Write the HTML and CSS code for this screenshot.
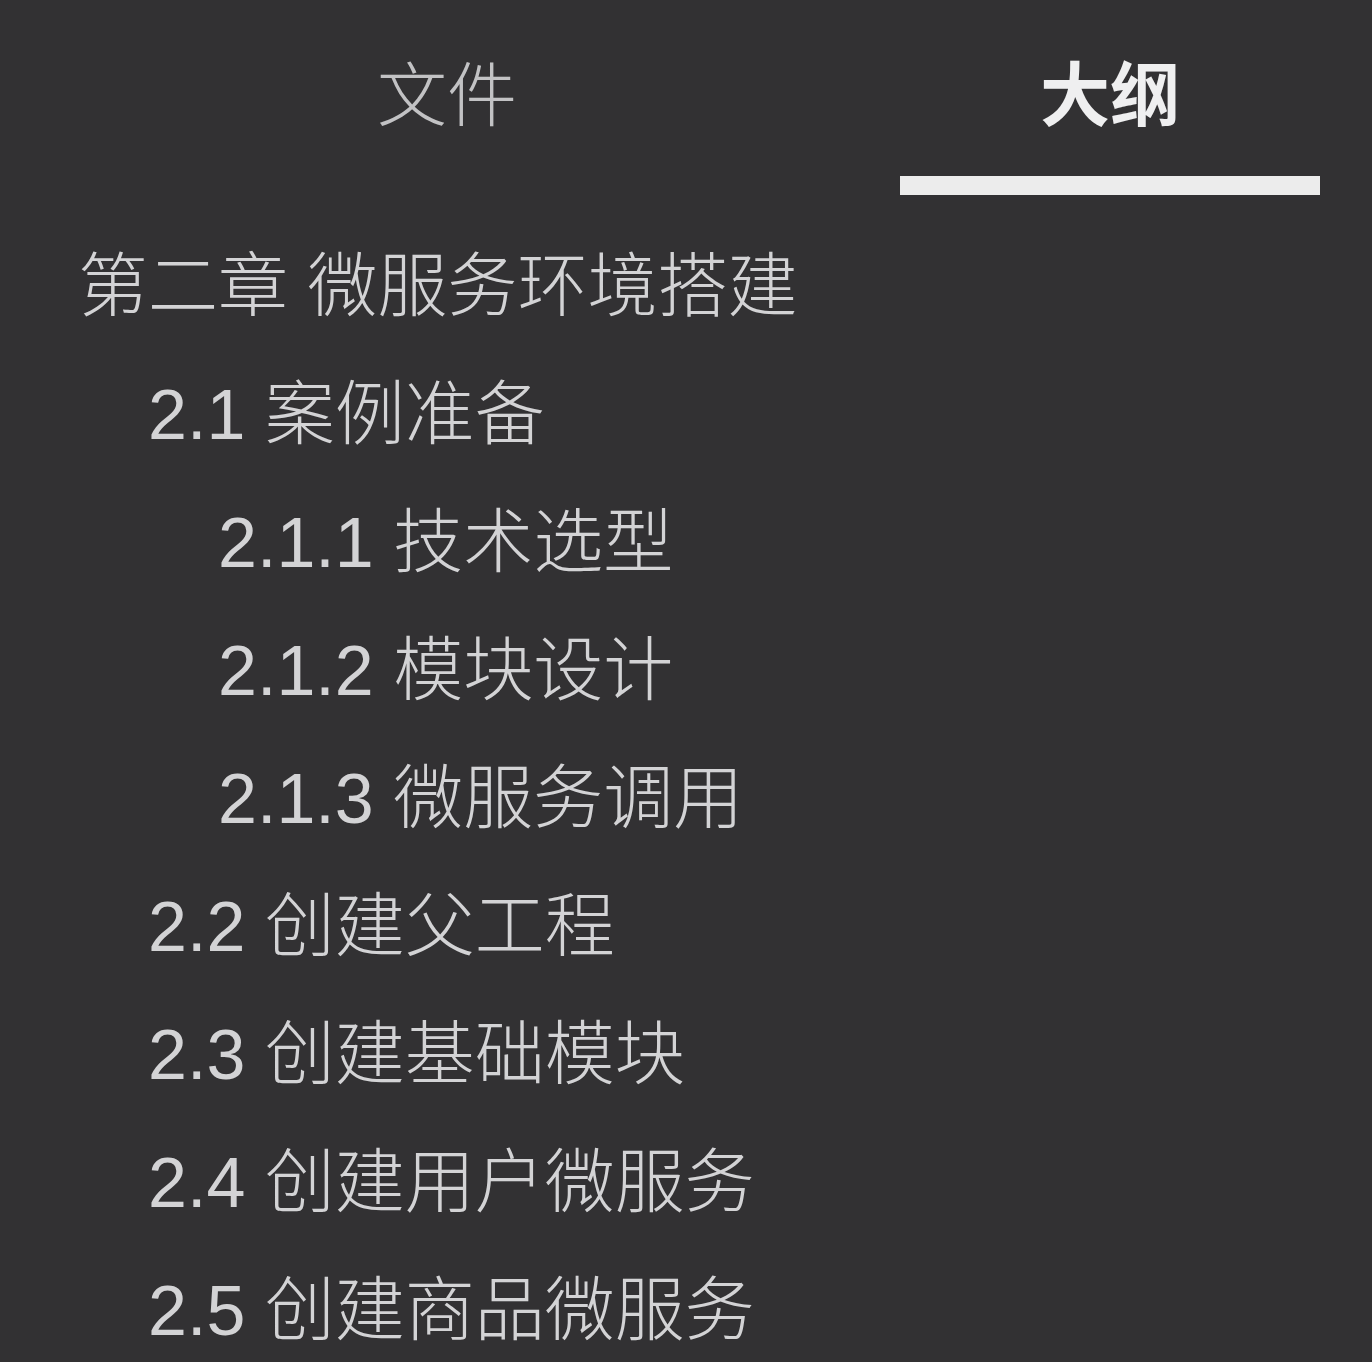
FILE: index.html
```html
<!DOCTYPE html>
<html lang="zh-CN">
<head>
<meta charset="utf-8">
<title>大纲</title>
<link rel="stylesheet" href="styles.css">
</head>
<body>
<div class="sidebar">
  <div class="tabs">
    <div class="tab tab-files"><span class="tab-label">文件</span></div>
    <div class="tab tab-outline active"><span class="tab-label">大纲</span><span class="tab-bar"></span></div>
  </div>
  <ul class="outline">
    <li class="lv1">第二章 微服务环境搭建</li>
    <li class="lv2">2.1 案例准备</li>
    <li class="lv3">2.1.1 技术选型</li>
    <li class="lv3">2.1.2 模块设计</li>
    <li class="lv3">2.1.3 微服务调用</li>
    <li class="lv2">2.2 创建父工程</li>
    <li class="lv2">2.3 创建基础模块</li>
    <li class="lv2">2.4 创建用户微服务</li>
    <li class="lv2">2.5 创建商品微服务</li>
  </ul>
</div>
</body>
</html>
```
FILE: styles.css
```css
html, body {
  margin: 0;
  padding: 0;
  background: #323133;
}
body {
  width: 1372px;
  height: 1362px;
  overflow: hidden;
  font-family: "Liberation Sans", "Noto Sans CJK SC", sans-serif;
}
.sidebar {
  display: flex;
  flex-direction: column;
}
.tabs {
  display: flex;
  padding-left: 237px;
  gap: 243px;
}
.tab {
  width: 420px;
  display: flex;
  flex-direction: column;
  align-items: center;
  padding-top: 55px;
}
.tab-label {
  font-size: 70px;
  line-height: 84px;
  height: 84px;
  color: #c2c2c4;
  font-weight: 300;
}
.tab.active .tab-label {
  color: #efeff0;
  font-weight: 700;
}
.tab-bar {
  display: block;
  margin-top: 37px;
  width: 420px;
  height: 19px;
  background: #ececec;
}
.outline {
  list-style: none;
  margin: 28px 0 0 0;
  padding: 0;
}
.outline li {
  font-size: 70px;
  line-height: 128px;
  height: 128px;
  color: #d3d3d5;
  font-weight: 300;
  white-space: nowrap;
}
.lv1 { padding-left: 78px; }
.lv2 { padding-left: 148px; }
.lv3 { padding-left: 218px; }
```
